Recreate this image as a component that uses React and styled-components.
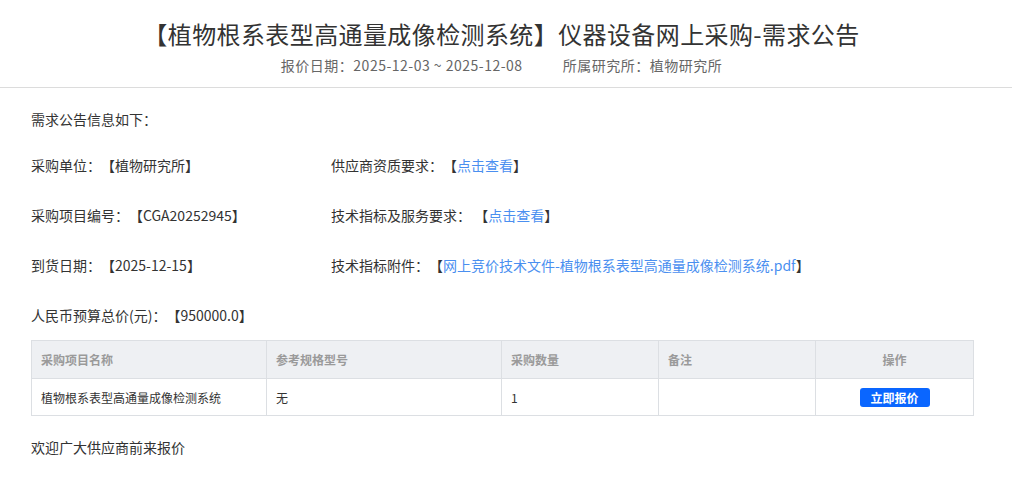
import React from "react";
import styled, { createGlobalStyle } from "styled-components";

const GlobalStyle = createGlobalStyle`
  html, body {
    margin: 0;
    padding: 0;
    background: #fff;
  }
  body {
    font-family: "Noto Sans CJK SC", "Noto Sans", "Liberation Sans", sans-serif;
    color: #333;
    text-spacing-trim: space-all;
  }
`;

const Header = styled.header`
  height: 88px;
  border-bottom: 1px solid #dcdcdc;
  display: flex;
  flex-direction: column;
  align-items: center;
  padding: 16px 9px 0 0;
  box-sizing: border-box;
`;

const Title = styled.h1`
  margin: 0;
  font-size: 24px;
  letter-spacing: 0.4px;
  line-height: 36px;
  font-weight: 400;
  color: #333;
`;

const Meta = styled.div`
  display: flex;
  gap: 40px;
  margin-top: 3px;
  font-size: 14px;
  letter-spacing: 0.5px;
  line-height: 20px;
  color: #666;
`;

const Body = styled.main`
  padding: 21px 39px 0 31px;
  font-size: 14px;
`;

const Intro = styled.p`
  margin: 0 0 11px;
  line-height: 20px;
`;

const InfoRow = styled.div`
  display: grid;
  grid-template-columns: 300px 1fr;
  height: 50px;
  align-items: center;
`;

const Field = styled.div`
  white-space: nowrap;
`;

const Link = styled.a`
  color: #4a8ff0;
  text-decoration: none;
  cursor: pointer;
`;

const Table = styled.table`
  width: 100%;
  border-collapse: collapse;
  table-layout: fixed;
  font-size: 12px;
`;

const Th = styled.th`
  height: 38px;
  box-sizing: border-box;
  background: #eef0f3;
  border: 1px solid #dcdfe3;
  color: #9a9a9a;
  font-weight: 700;
  padding: 0 9px;
  text-align: ${(p) => (p.$center ? "center" : "left")};
`;

const Td = styled.td`
  height: 37px;
  box-sizing: border-box;
  border: 1px solid #dcdfe3;
  padding: 0 9px;
  color: #333;
  text-align: ${(p) => (p.$center ? "center" : "left")};
`;

const QuoteButton = styled.button`
  width: 70px;
  height: 19px;
  border: none;
  border-radius: 3px;
  background: #0a66ff;
  color: #fff;
  font-family: inherit;
  font-size: 12px;
  font-weight: 700;
  line-height: 19px;
  padding: 0;
  cursor: pointer;
`;

const Outro = styled.p`
  margin: 21px 0 0;
  line-height: 20px;
`;

const columns = [
  { label: "采购项目名称", width: 235 },
  { label: "参考规格型号", width: 235 },
  { label: "采购数量", width: 157 },
  { label: "备注", width: 157 },
  { label: "操作", width: 158, center: true },
];

export default function App() {
  return (
    <>
      <GlobalStyle />
      <Header>
        <Title>【植物根系表型高通量成像检测系统】仪器设备网上采购-需求公告</Title>
        <Meta>
          <span>报价日期：2025-12-03 ~ 2025-12-08</span>
          <span>所属研究所：植物研究所</span>
        </Meta>
      </Header>
      <Body>
        <Intro>需求公告信息如下：</Intro>
        <InfoRow>
          <Field>采购单位：【植物研究所】</Field>
          <Field>
            供应商资质要求：【<Link>点击查看</Link>】
          </Field>
        </InfoRow>
        <InfoRow>
          <Field>采购项目编号：【CGA20252945】</Field>
          <Field>
            技术指标及服务要求：&nbsp;【<Link>点击查看</Link>】
          </Field>
        </InfoRow>
        <InfoRow>
          <Field>到货日期：【2025-12-15】</Field>
          <Field>
            技术指标附件：【<Link>网上竞价技术文件-植物根系表型高通量成像检测系统.pdf</Link>】
          </Field>
        </InfoRow>
        <InfoRow>
          <Field>人民币预算总价(元)：【950000.0】</Field>
        </InfoRow>
        <Table>
          <colgroup>
            {columns.map((c) => (
              <col key={c.label} style={{ width: c.width }} />
            ))}
          </colgroup>
          <thead>
            <tr>
              {columns.map((c) => (
                <Th key={c.label} $center={c.center}>
                  {c.label}
                </Th>
              ))}
            </tr>
          </thead>
          <tbody>
            <tr>
              <Td>植物根系表型高通量成像检测系统</Td>
              <Td>无</Td>
              <Td>1</Td>
              <Td></Td>
              <Td $center>
                <QuoteButton>立即报价</QuoteButton>
              </Td>
            </tr>
          </tbody>
        </Table>
        <Outro>欢迎广大供应商前来报价</Outro>
      </Body>
    </>
  );
}
